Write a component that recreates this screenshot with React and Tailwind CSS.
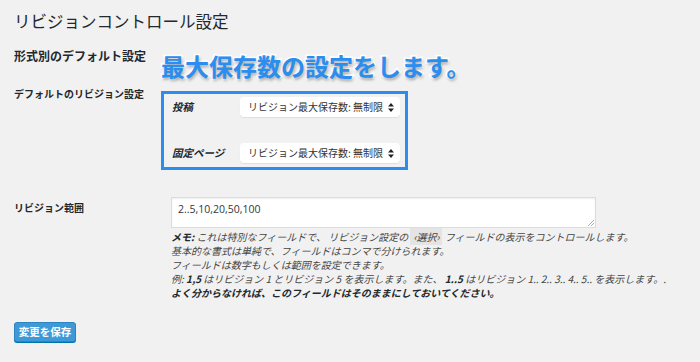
import React from 'react';

const jp = { fontFamily: '"Noto Sans CJK JP", "Open Sans", sans-serif' };
const latin = { fontFamily: '"Open Sans", "Noto Sans CJK JP", sans-serif' };

const Arrows = () => (
  <svg width="6" height="9" viewBox="0 0 6 9" className="shrink-0">
    <path d="M3 0 L6 3.5 L0 3.5 Z" fill="#222" />
    <path d="M3 9 L6 5.5 L0 5.5 Z" fill="#222" />
  </svg>
);

const FakeSelect = () => (
  <div className="flex h-[20px] w-[160px] items-center justify-between rounded-[4px] bg-white pl-[8px] pr-[6px] text-[10px] whitespace-nowrap text-[#333] shadow-[0_1px_1px_rgba(0,0,0,0.08)]">
    <span className="leading-none">リビジョン最大保存数: 無制限</span>
    <Arrows />
  </div>
);

export default function App() {
  return (
    <div className="relative min-h-[362px] w-[700px] bg-[#f1f1f1] pl-[14px] text-[#23282d]" style={jp}>
      <h1 className="pt-[11px] text-[16.5px] leading-[20px] font-normal">リビジョンコントロール設定</h1>
      <h2 className="mt-[17px] text-[12px] leading-[16px] font-bold">形式別のデフォルト設定</h2>

      <div className="absolute left-[161px] top-[51px] text-[24px] leading-[30px] font-bold text-[#2b8df0] [-webkit-text-stroke:3px_#fff] [paint-order:stroke_fill] [text-shadow:1px_2px_3px_rgba(0,0,0,0.35)]">
        最大保存数の設定をします。
      </div>

      <div className="mt-[23px] grid grid-cols-[147px_auto]">
        <div className="text-[10px] leading-[14px] font-bold">デフォルトのリビジョン設定</div>
        <div className="mt-[4px] w-[247px] border-[3px] border-[#2b8df0] pb-[4px] pl-[8px] pr-[5px] pt-[3px]">
          <div className="flex items-center">
            <span className="w-[68px] text-[10.5px] font-bold italic">投稿</span>
            <FakeSelect />
          </div>
          <div className="mt-[26px] flex items-center">
            <span className="w-[68px] text-[10.5px] font-bold italic">固定ページ</span>
            <FakeSelect />
          </div>
        </div>
      </div>

      <div className="mt-[27px] grid grid-cols-[157px_auto]">
        <div className="pt-[4px] text-[10px] leading-[14px] font-bold">リビジョン範囲</div>
        <div>
          <div className="relative h-[31px] w-[425px] border border-[#dcdcdc] bg-white px-[6px] pt-[3px] text-[10.5px] leading-[16px] text-[#32373c] shadow-[inset_0_1px_2px_rgba(0,0,0,0.07)]" style={latin}>
            2..5,10,20,50,100
            <svg width="6" height="6" viewBox="0 0 6 6" className="absolute bottom-[1px] right-[1px]">
              <path d="M6 0 L0 6 M6 3 L3 6" stroke="#999" strokeWidth="0.8" />
            </svg>
          </div>
          <div className="mt-[2px] text-[10px] leading-[14px] italic text-[#444]">
            <p><b className="text-[#23282d]">メモ:</b> これは特別なフィールドで、 リビジョン設定の <code className="bg-[#e4e4e4] px-[3px] py-[1px]" style={jp}>‹選択›</code> フィールドの表示をコントロールします。</p>
            <p>基本的な書式は単純で、フィールドはコンマで分けられます。</p>
            <p>フィールドは数字もしくは範囲を設定できます。</p>
            <p>例: <b className="text-[#23282d]">1,5</b> はリビジョン 1 とリビジョン 5 を表示します。また、 <b className="text-[#23282d]">1..5</b> はリビジョン 1.. 2.. 3.. 4.. 5.. を表示します。.</p>
            <p className="font-bold text-[#23282d]">よく分からなければ、このフィールドはそのままにしておいてください。</p>
          </div>
        </div>
      </div>

      <button className="mt-[22px] h-[20px] w-[62px] rounded-[3px] border border-[#2e84bf] bg-[#3d99d7] text-[10.5px] font-bold leading-none text-white shadow-[0_1px_0_#0073aa]">
        変更を保存
      </button>
    </div>
  );
}
